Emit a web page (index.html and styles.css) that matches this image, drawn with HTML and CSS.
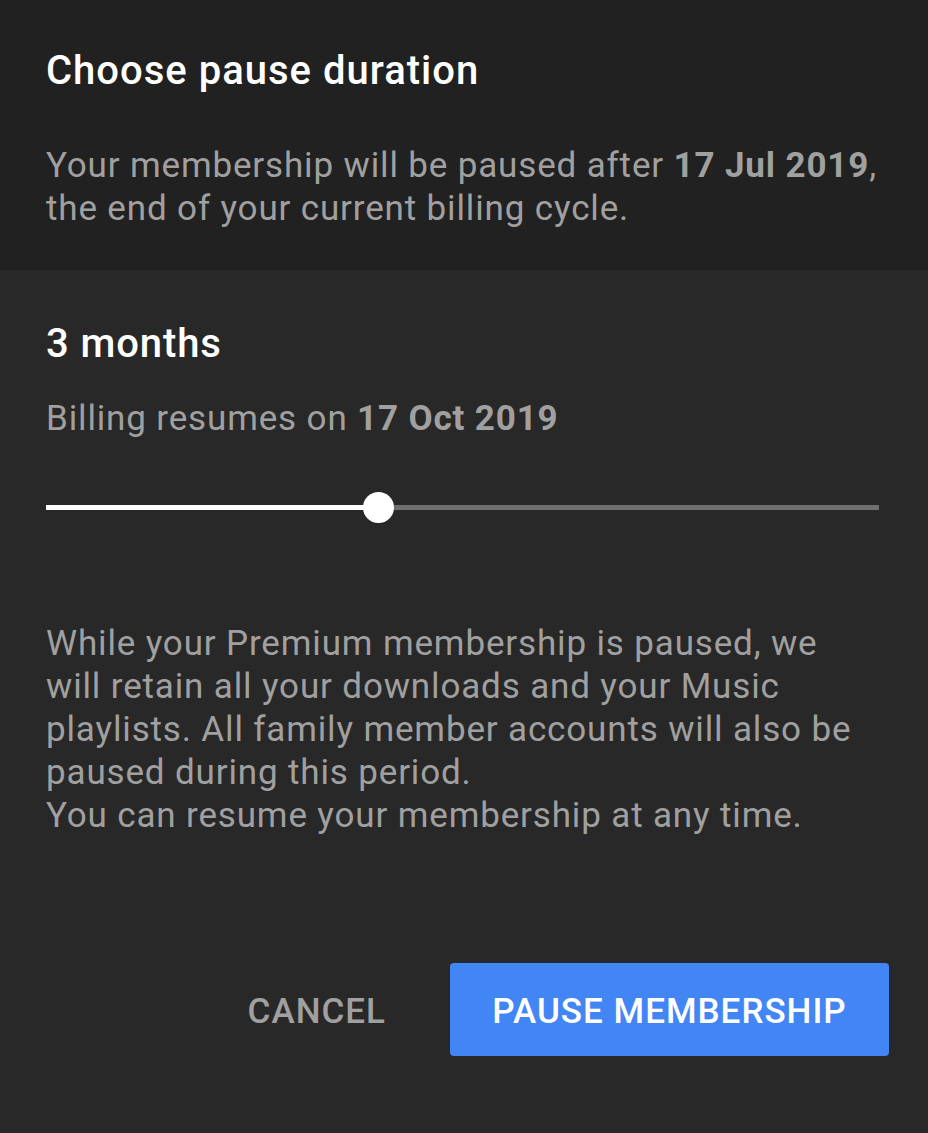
FILE: index.html
```html
<!doctype html>
<html>
<head>
    <meta charset="UTF-8">
    <meta name="viewport" content="width=device-width, initial-scale=1.0">
    <title>Choose pause duration</title>
    <link rel="stylesheet" href="styles.css">
</head>
<body>
    <div class="dialog">
        <div class="dialog-header">
            <h2 class="dialog-title">Choose pause duration</h2>
            <p class="dialog-text">Your membership will be paused after <b>17 Jul 2019</b>, the end of your current billing cycle.</p>
        </div>
        <div class="dialog-body">
            <h3 class="duration">3 months</h3>
            <p class="dialog-text">Billing resumes on <b>17 Oct 2019</b></p>

            <div class="slider">
                <div class="slider-active" style="width: 40%"></div>
                <div class="slider-thumb" style="left: 40%"></div>
            </div>

            <p class="dialog-text info">While your Premium membership is paused, we will retain all your downloads and your Music playlists. All family member accounts will also be paused during this period.<br>You can resume your membership at any time.</p>

            <div class="actions">
                <button class="btn btn-text">Cancel</button>
                <button class="btn btn-primary">Pause membership</button>
            </div>
        </div>
    </div>
</body>
</html>
```

FILE: styles.css
```css
html, body {
    margin: 0;
    padding: 0;
    background-color: #282828;
    font-family: Roboto, "Noto Sans", sans-serif;
}
.dialog {
    width: 928px;
    min-height: 1133px;
    background-color: #282828;
}
.dialog-header {
    background-color: #212121;
    height: 270px;
    box-sizing: border-box;
    padding: 47px 46px 0;
}
.dialog-title {
    margin: 0;
    font-size: 40px;
    line-height: 48px;
    font-weight: 500;
    letter-spacing: 1px;
    color: #fff;
}
.dialog-text {
    margin: 0;
    font-size: 35px;
    line-height: 43px;
    letter-spacing: 0.85px;
    color: #a0a0a0;
}
.dialog-text b {
    font-weight: 700;
}
.dialog-header .dialog-text {
    margin-top: 49px;
}
.dialog-body {
    padding: 50px 46px 0;
}
.duration {
    margin: 0 0 29px;
    font-size: 40px;
    line-height: 48px;
    font-weight: 500;
    letter-spacing: 0.9px;
    color: #fff;
}
.slider {
    position: relative;
    height: 5px;
    margin-top: 65px;
    width: 833px;
    background-color: #6f6f6f;
}
.slider-active {
    height: 5px;
    background-color: #fff;
}
.slider-thumb {
    position: absolute;
    top: -13px;
    width: 31px;
    height: 31px;
    margin-left: -16px;
    border-radius: 50%;
    background-color: #fff;
}
.info {
    margin-top: 112px;
}
.actions {
    display: flex;
    justify-content: flex-end;
    align-items: center;
    gap: 30px;
    margin-top: 126px;
    margin-right: -7px;
}
.btn {
    font-family: Roboto, "Noto Sans", sans-serif;
    font-size: 35px;
    font-weight: 500;
    letter-spacing: 1px;
    text-transform: uppercase;
    border: none;
    padding-top: 4px;
    cursor: pointer;
}
.btn-text {
    background: none;
    color: #a0a0a0;
    padding-left: 34px;
    padding-right: 34px;
    height: 93px;
}
.btn-primary {
    background-color: #4285f4;
    color: #fff;
    height: 93px;
    width: 439px;
    border-radius: 4px;
}
```
